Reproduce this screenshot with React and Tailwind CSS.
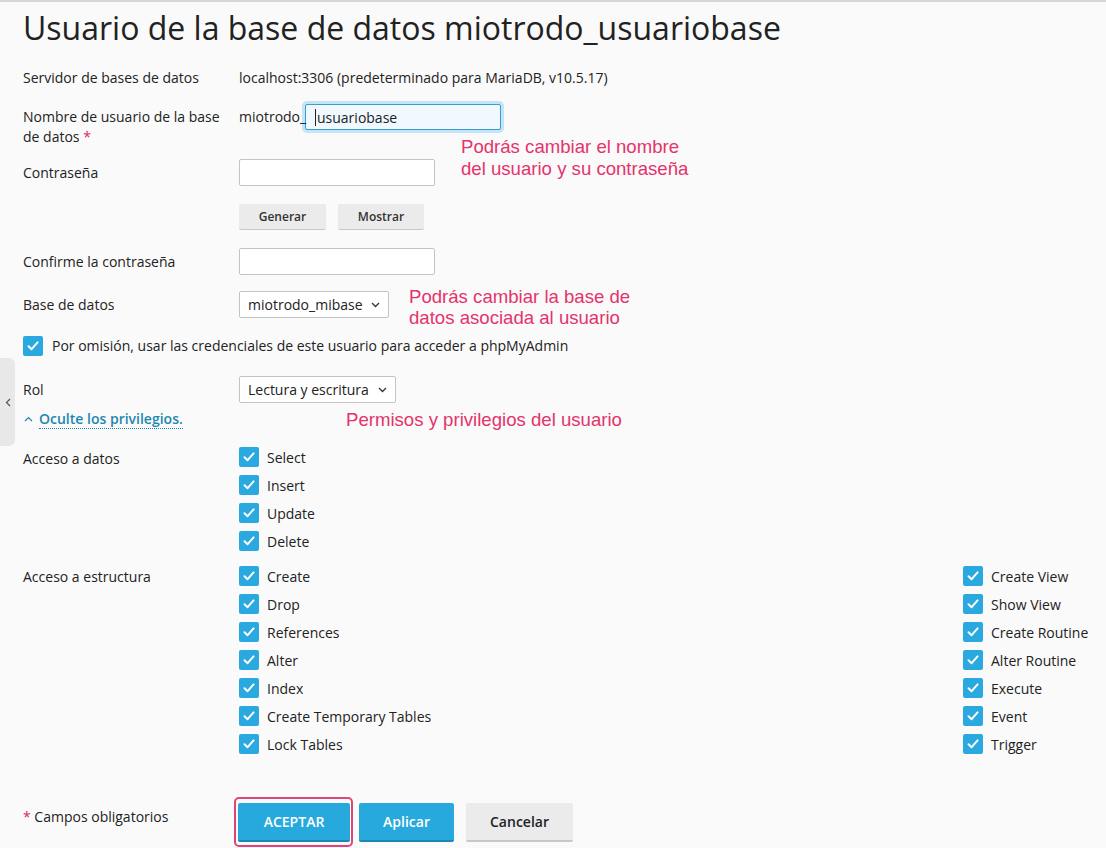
import React from 'react'

const font = { fontFamily: '"Open Sans", "Liberation Sans", sans-serif' }

function Check({ label }) {
  return (
    <div className="flex items-center h-[20px]">
      <span className="w-[20px] h-[20px] rounded-[2px] bg-[#29a9df] flex items-center justify-center flex-shrink-0">
        <svg width="14" height="14" viewBox="0 0 14 14" fill="none">
          <path d="M2.5 7.2 L5.6 10.2 L11.6 3.4" stroke="white" strokeWidth="2" strokeLinecap="round" strokeLinejoin="round" />
        </svg>
      </span>
      {label && <span className="ml-[8px] text-[14px] text-[#222]">{label}</span>}
    </div>
  )
}

function Input({ className = '' }) {
  return <div className={'h-[27px] w-[196px] bg-white border border-[#c4c4c4] rounded-[2px] ' + className} />
}

function Select({ value, w }) {
  return (
    <div className={'h-[27px] bg-white border border-[#c4c4c4] rounded-[2px] flex items-center justify-between pl-[8px] pr-[8px] text-[14px] text-[#222] ' + w}>
      <span>{value}</span>
      <svg width="9" height="6" viewBox="0 0 9 6" fill="none">
        <path d="M1 1 L4.5 4.5 L8 1" stroke="#333" strokeWidth="1.3" />
      </svg>
    </div>
  )
}

function GrayBtn({ children, w }) {
  return (
    <div className={'h-[26px] bg-[#ebebeb] border-b border-[#c8c8c8] rounded-[2px] flex items-center justify-center text-[12px] font-semibold text-[#333] ' + w}>
      {children}
    </div>
  )
}

const Note = ({ className, children }) => (
  <div className={'absolute text-[18.6px] text-[#e5336b] ' + className} style={{ fontFamily: '"Liberation Sans", Arial, sans-serif' }}>
    {children}
  </div>
)

export default function App() {
  const datos = ['Select', 'Insert', 'Update', 'Delete']
  const estr1 = ['Create', 'Drop', 'References', 'Alter', 'Index', 'Create Temporary Tables', 'Lock Tables']
  const estr2 = ['Create View', 'Show View', 'Create Routine', 'Alter Routine', 'Execute', 'Event', 'Trigger']

  return (
    <div className="relative w-[1106px] h-[848px] overflow-hidden bg-[#fafafa] border-t-2 border-[#d6d6d6] text-[#222] text-[14px]" style={font}>
      {/* side tab */}
      <div className="absolute left-0 top-[356px] w-[15px] h-[88px] bg-[#e8e8e8] rounded-r-[6px] flex items-center justify-center">
        <svg width="6" height="9" viewBox="0 0 6 9" fill="none">
          <path d="M5 1 L1.5 4.5 L5 8" stroke="#555" strokeWidth="1.2" />
        </svg>
      </div>

      <div className="pl-[23px]">
        <h1 className="text-[32px] leading-[42px] mt-[5px] text-[#222] font-normal">
          Usuario de la base de datos miotrodo_usuariobase
        </h1>

        <div className="flex mt-[19px] leading-[20px]">
          <div className="w-[216px]">Servidor de bases de datos</div>
          <div>localhost:3306 (predeterminado para MariaDB, v10.5.17)</div>
        </div>

        <div className="flex mt-[16px]">
          <div className="w-[216px] pr-[4px] pt-[3px] leading-[20px]">
            Nombre de usuario de la base de datos <span className="text-[#e0245e]">*</span>
          </div>
          <div className="flex items-start">
            <span className="relative z-10 w-[66px] leading-[26px]">miotrodo_</span>
            <div className="h-[26px] w-[196px] bg-[#f0f9ff] border border-[#3d9cc9] rounded-[2px] shadow-[0_0_0_3px_#c3e5f8] flex items-center pl-[9px]">
              <span className="w-px h-[17px] bg-[#222] mr-[1px]" />
              <span>usuariobase</span>
            </div>
          </div>
        </div>

        <div className="flex items-center mt-[12px]">
          <div className="w-[216px]">Contraseña</div>
          <Input />
        </div>

        <div className="flex mt-[18px] pl-[216px] gap-[12px]">
          <GrayBtn w="w-[87px]">Generar</GrayBtn>
          <GrayBtn w="w-[86px]">Mostrar</GrayBtn>
        </div>

        <div className="flex items-center mt-[18px]">
          <div className="w-[216px]">Confirme la contraseña</div>
          <Input />
        </div>

        <div className="flex items-center mt-[16px]">
          <div className="w-[216px]">Base de datos</div>
          <Select value="miotrodo_mibase" w="w-[150px]" />
        </div>

        <div className="flex items-center mt-[17px] gap-[9px]">
          <Check />
          <span>Por omisión, usar las credenciales de este usuario para acceder a phpMyAdmin</span>
        </div>

        <div className="flex items-center mt-[20px]">
          <div className="w-[216px]">Rol</div>
          <Select value="Lectura y escritura" w="w-[157px]" />
        </div>

        <div className="flex items-center mt-[6px] h-[20px]">
          <svg width="9" height="6" viewBox="0 0 9 6" fill="none" className="ml-[1px]">
            <path d="M1 5 L4.5 1.5 L8 5" stroke="#1d87b0" strokeWidth="1.2" />
          </svg>
          <span className="ml-[6px] font-semibold text-[#1d87b0] border-b border-dotted border-[#1d87b0] leading-[18px]">
            Oculte los privilegios.
          </span>
        </div>

        <div className="flex mt-[18px]">
          <div className="w-[216px] pt-[2px] leading-[20px]">Acceso a datos</div>
          <div className="flex flex-col gap-[8px]">
            {datos.map(d => <Check key={d} label={d} />)}
          </div>
        </div>

        <div className="flex mt-[15px]">
          <div className="w-[216px] leading-[20px] pt-[1px]">Acceso a estructura</div>
          <div className="grid grid-cols-[724px_1fr]">
            <div className="flex flex-col gap-[8px]">
              {estr1.map(d => <Check key={d} label={d} />)}
            </div>
            <div className="flex flex-col gap-[8px]">
              {estr2.map(d => <Check key={d} label={d} />)}
            </div>
          </div>
        </div>

        <div className="flex items-start mt-[49px]">
          <div className="w-[215px] pt-[4px] leading-[20px]">
            <span className="text-[#e0245e]">*</span> Campos obligatorios
          </div>
          <div className="flex">
            <div className="relative">
              <div className="absolute -left-[4px] -right-[3px] -top-[6px] -bottom-[5px] rounded-[5px] border-2 border-[#e0457a]" />
              <div className="w-[112px] h-[39px] bg-[#28a9dd] border-b-2 border-[#1c87b5] rounded-[2px] flex items-center justify-center text-white font-semibold">
                ACEPTAR
              </div>
            </div>
            <div className="ml-[9px] w-[95px] h-[39px] bg-[#28a9dd] border-b-2 border-[#1c87b5] rounded-[2px] flex items-center justify-center text-white font-semibold">
              Aplicar
            </div>
            <div className="ml-[12px] w-[107px] h-[39px] bg-[#ebebeb] border-b-2 border-[#c8c8c8] rounded-[2px] flex items-center justify-center text-[#222] font-semibold">
              Cancelar
            </div>
          </div>
        </div>
      </div>

      <Note className="left-[461px] top-[134px] leading-[22px]">Podrás cambiar el nombre<br />del usuario y su contraseña</Note>
      <Note className="left-[409px] top-[284px] leading-[21px]">Podrás cambiar la base de<br />datos asociada al usuario</Note>
      <Note className="left-[346px] top-[407px] leading-[22px]">Permisos y privilegios del usuario</Note>
    </div>
  )
}
